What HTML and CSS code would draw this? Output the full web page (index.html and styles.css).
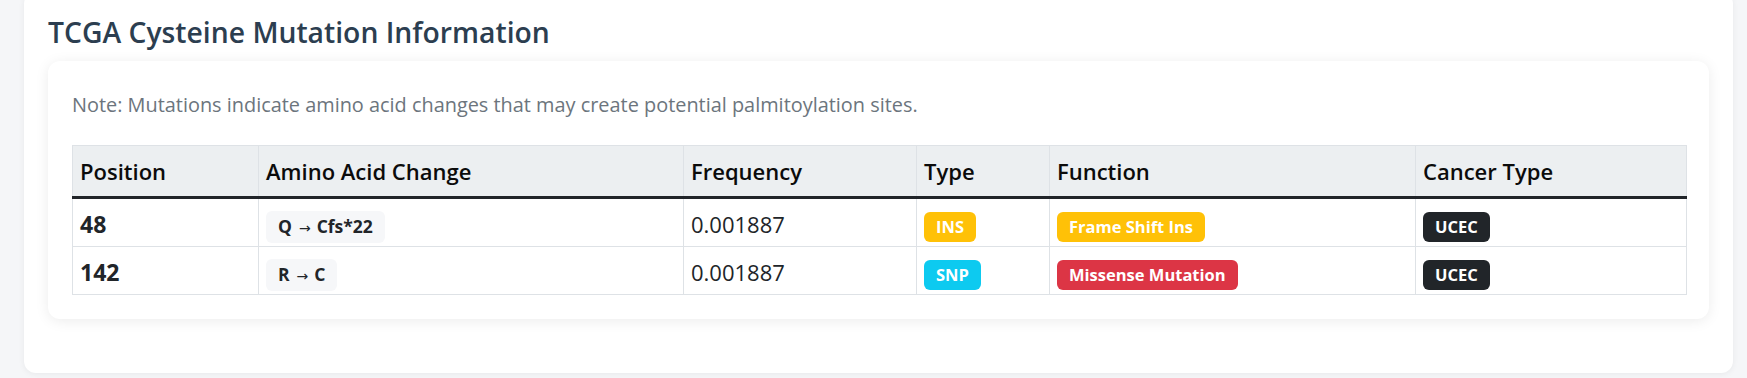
FILE: index.html
```html
<!DOCTYPE html>
<html lang="en">
<head>
<meta charset="utf-8">
<title>TCGA Cysteine Mutation Information</title>
<link rel="stylesheet" href="styles.css">
</head>
<body>
<div class="page">
  <section class="outer-card">
    <h3 class="section-title">TCGA Cysteine Mutation Information</h3>
    <div class="inner-card">
      <p class="note">Note: Mutations indicate amino acid changes that may create potential palmitoylation sites.</p>
      <table class="mut-table">
        <thead>
          <tr>
            <th class="c-pos">Position</th>
            <th class="c-aa">Amino Acid Change</th>
            <th class="c-freq">Frequency</th>
            <th class="c-type">Type</th>
            <th class="c-func">Function</th>
            <th class="c-cancer">Cancer Type</th>
          </tr>
        </thead>
        <tbody>
          <tr>
            <td class="pos">48</td>
            <td><span class="aa">Q<span class="arrow">→</span>Cfs*22</span></td>
            <td>0.001887</td>
            <td><span class="badge b-warning">INS</span></td>
            <td><span class="badge b-warning">Frame Shift Ins</span></td>
            <td><span class="badge b-dark">UCEC</span></td>
          </tr>
          <tr>
            <td class="pos">142</td>
            <td><span class="aa">R<span class="arrow">→</span>C</span></td>
            <td>0.001887</td>
            <td><span class="badge b-info">SNP</span></td>
            <td><span class="badge b-danger">Missense Mutation</span></td>
            <td><span class="badge b-dark">UCEC</span></td>
          </tr>
        </tbody>
      </table>
    </div>
  </section>
</div>
</body>
</html>
```

FILE: styles.css
```css
* { box-sizing: border-box; }

html, body {
  margin: 0;
  padding: 0;
  background: #f5f6f8;
  font-family: "Open Sans", "Noto Sans", Arial, sans-serif;
  color: #212529;
}

.page {
  padding: 0 14px 0 24px;
  height: 378px;
  overflow: hidden;
}

.outer-card {
  margin-top: -8px;
  background: #ffffff;
  border-radius: 12px;
  box-shadow: 0 1px 6px rgba(0, 0, 0, 0.06);
  padding: 24px;
}

.section-title {
  margin: 0 0 12px 0;
  font-size: 28.3px;
  line-height: 33px;
  font-weight: 600;
  color: #2c3e50;
}

.inner-card {
  background: #ffffff;
  border-radius: 12px;
  box-shadow: 0 2px 14px rgba(0, 0, 0, 0.08);
  padding: 24px;
  margin-bottom: 30px;
}

.note {
  margin: 6px 0 26px 0;
  font-size: 19.9px;
  line-height: 28px;
  color: #6c757d;
}

.mut-table {
  width: 100%;
  border-collapse: collapse;
  table-layout: fixed;
  font-size: 22px;
  line-height: 33px;
}

.mut-table th,
.mut-table td {
  border: 1px solid #dee2e6;
  padding: 9px 7px 5px 7px;
  text-align: left;
  vertical-align: top;
}

.mut-table th {
  background: #eceff1;
  color: #0b0b0b;
  font-weight: 600;
  padding-bottom: 8px;
  border-bottom: 3px solid #212529;
}

.c-pos { width: 186px; }
.c-aa { width: 425px; }
.c-freq { width: 233px; }
.c-type { width: 133px; }
.c-func { width: 366px; }
.c-cancer { width: 271px; }

.pos {
  font-weight: 700;
  font-size: 23px;
}

.aa {
  display: inline-block;
  background: #f6f7f9;
  border-radius: 6px;
  padding: 6px 12px;
  margin-bottom: -6px;
  font-size: 17.5px;
  line-height: 18px;
  font-weight: 700;
  color: #212529;
}

.arrow {
  display: inline-block;
  margin: 0 6px 0 7px;
  font-family: "DejaVu Sans", sans-serif;
  font-weight: 400;
  font-size: 14px;
  line-height: 18px;
}

.badge {
  display: inline-block;
  border-radius: 6px;
  padding: 6px 12px;
  margin-bottom: -6px;
  font-size: 16.5px;
  line-height: 18px;
  font-weight: 700;
  color: #ffffff;
}

.b-warning { background: #ffc107; }
.b-info { background: #0dcaf0; }
.b-danger { background: #dc3545; }
.b-dark { background: #212529; }
```
